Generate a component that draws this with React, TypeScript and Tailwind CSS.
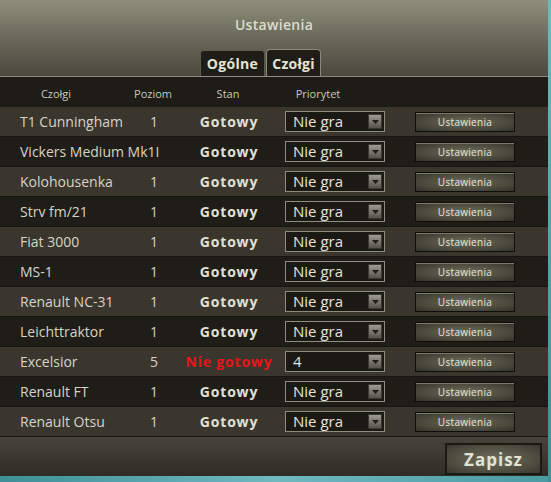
import React from "react";

type Row = { name: string; level: string; ready: boolean; prio: string };

const rows: Row[] = [
  { name: "T1 Cunningham", level: "1", ready: true, prio: "Nie gra" },
  { name: "Vickers Medium Mk1I", level: "", ready: true, prio: "Nie gra" },
  { name: "Kolohousenka", level: "1", ready: true, prio: "Nie gra" },
  { name: "Strv fm/21", level: "1", ready: true, prio: "Nie gra" },
  { name: "Fiat 3000", level: "1", ready: true, prio: "Nie gra" },
  { name: "MS-1", level: "1", ready: true, prio: "Nie gra" },
  { name: "Renault NC-31", level: "1", ready: true, prio: "Nie gra" },
  { name: "Leichttraktor", level: "1", ready: true, prio: "Nie gra" },
  { name: "Excelsior", level: "5", ready: false, prio: "4" },
  { name: "Renault FT", level: "1", ready: true, prio: "Nie gra" },
  { name: "Renault Otsu", level: "1", ready: true, prio: "Nie gra" },
];

const sans = { fontFamily: '"Open Sans", "DejaVu Sans", sans-serif' };

function Select({ value }: { value: string }) {
  return (
    <div className="flex h-[21px] w-[100px] items-center justify-between border border-[#8e8c7c] bg-[#1b1913] pl-[7px] pr-[2px]">
      <span className="text-[15px] leading-none text-[#e6e4d8]" style={sans}>
        {value}
      </span>
      <div className="flex h-[15px] w-[14px] items-center justify-center border border-[#3a3a32] bg-gradient-to-b from-[#9c9c92] to-[#55554b]">
        <svg width="7" height="4" viewBox="0 0 7 4">
          <polygon points="0,0 7,0 3.5,4" fill="#1c1c18" />
        </svg>
      </div>
    </div>
  );
}

function SmallButton() {
  return (
    <div className="flex h-[20px] w-[100px] items-center justify-center border border-[#0f0e0a] bg-[radial-gradient(ellipse_at_center,#6b6b56_0%,#4c4b3e_60%,#34332a_100%)] shadow-[inset_0_1px_0_#7a7a68]">
      <span className="text-[10px] leading-none tracking-[0.3px] text-[#e8e8dc]" style={sans}>
        Ustawienia
      </span>
    </div>
  );
}

export default function App() {
  return (
    <div className="relative flex h-[482px] w-[551px] flex-col overflow-hidden bg-[#2a2822]" style={sans}>
      {/* top area */}
      <div className="relative flex h-[77px] w-[548px] flex-col items-center bg-gradient-to-b from-[#8e8f7b] via-[#6a6a5b] to-[#4a493e]">
        <div className="mt-[16px] text-[14px] font-semibold leading-[18px] tracking-[0.3px] text-[#dcdccc]">
          Ustawienia
        </div>
        <div className="mt-auto flex items-end self-start pl-[200px]">
          <div className="flex h-[26px] w-[65px] items-center justify-center rounded-t-[4px] border border-b-0 border-[#5a594d] bg-[#1f1d17]">
            <span className="text-[14px] font-bold tracking-[0.3px] text-[#e4e4d6]">Ogólne</span>
          </div>
          <div className="ml-[1px] flex h-[27px] w-[55px] items-center justify-center rounded-t-[4px] border border-b-0 border-[#8a897b] bg-[#1f1d17]">
            <span className="text-[14px] font-bold tracking-[0.3px] text-[#e4e4d6]">Czołgi</span>
          </div>
        </div>
      </div>
      {/* header */}
      <div className="flex h-[31px] w-[548px] items-center border-t border-[#8e8d80] bg-[#1e1c16] pt-[3px] text-[11px] text-[#c9c8bc]">
        <div className="w-[112px] text-center">Czołgi</div>
        <div className="w-[82px] text-center">Poziom</div>
        <div className="w-[68px] text-center">Stan</div>
        <div className="w-[112px] text-center">Priorytet</div>
      </div>
      {/* rows */}
      <div className="flex w-[548px] flex-col">
        {rows.map((r, i) => (
          <div
            key={i}
            className={`flex h-[30px] items-center border-b border-[#17150f] ${
              i % 2 === 0 ? "bg-[#3a362e]" : "bg-[#1f1d18]"
            }`}
          >
            <div className="w-[134px] whitespace-nowrap pl-[20px] text-[14px] text-[#d6d4c6]">{r.name}</div>
            <div className="w-[40px] text-center text-[14px] text-[#d6d4c6]">{r.level}</div>
            <div
              className={`w-[110px] text-center text-[14px] font-bold tracking-[0.8px] ${
                r.ready ? "text-[#e2e0d2]" : "text-[#e8141a]"
              }`}
            >
              {r.ready ? "Gotowy" : "Nie gotowy"}
            </div>
            <div className="ml-[1px]">
              <Select value={r.prio} />
            </div>
            <div className="ml-[30px]">
              <SmallButton />
            </div>
          </div>
        ))}
      </div>
      {/* footer */}
      <div className="flex h-[39px] w-[548px] items-start justify-end bg-gradient-to-b from-[#47453b] to-[#2e2c25] pr-[6px] pt-[6px]">
        <div className="flex h-[32px] w-[97px] items-center justify-center border-2 border-[#1a1912] bg-[radial-gradient(ellipse_at_center,#6e6d5a_0%,#4e4d40_65%,#393830_100%)]">
          <span className="text-[17px] font-bold tracking-[1px] text-[#e2e2d4]">Zapisz</span>
        </div>
      </div>
      {/* teal bottom strip */}
      <div className="h-[6px] w-[551px] bg-gradient-to-r from-[#3f8f97] via-[#6fb9bf] to-[#4a9aa2]" />
      {/* teal right edge */}
      <div className="absolute right-0 top-0 h-[482px] w-[3px] bg-gradient-to-b from-[#6fb8bf] to-[#3f8f97]" />
    </div>
  );
}
